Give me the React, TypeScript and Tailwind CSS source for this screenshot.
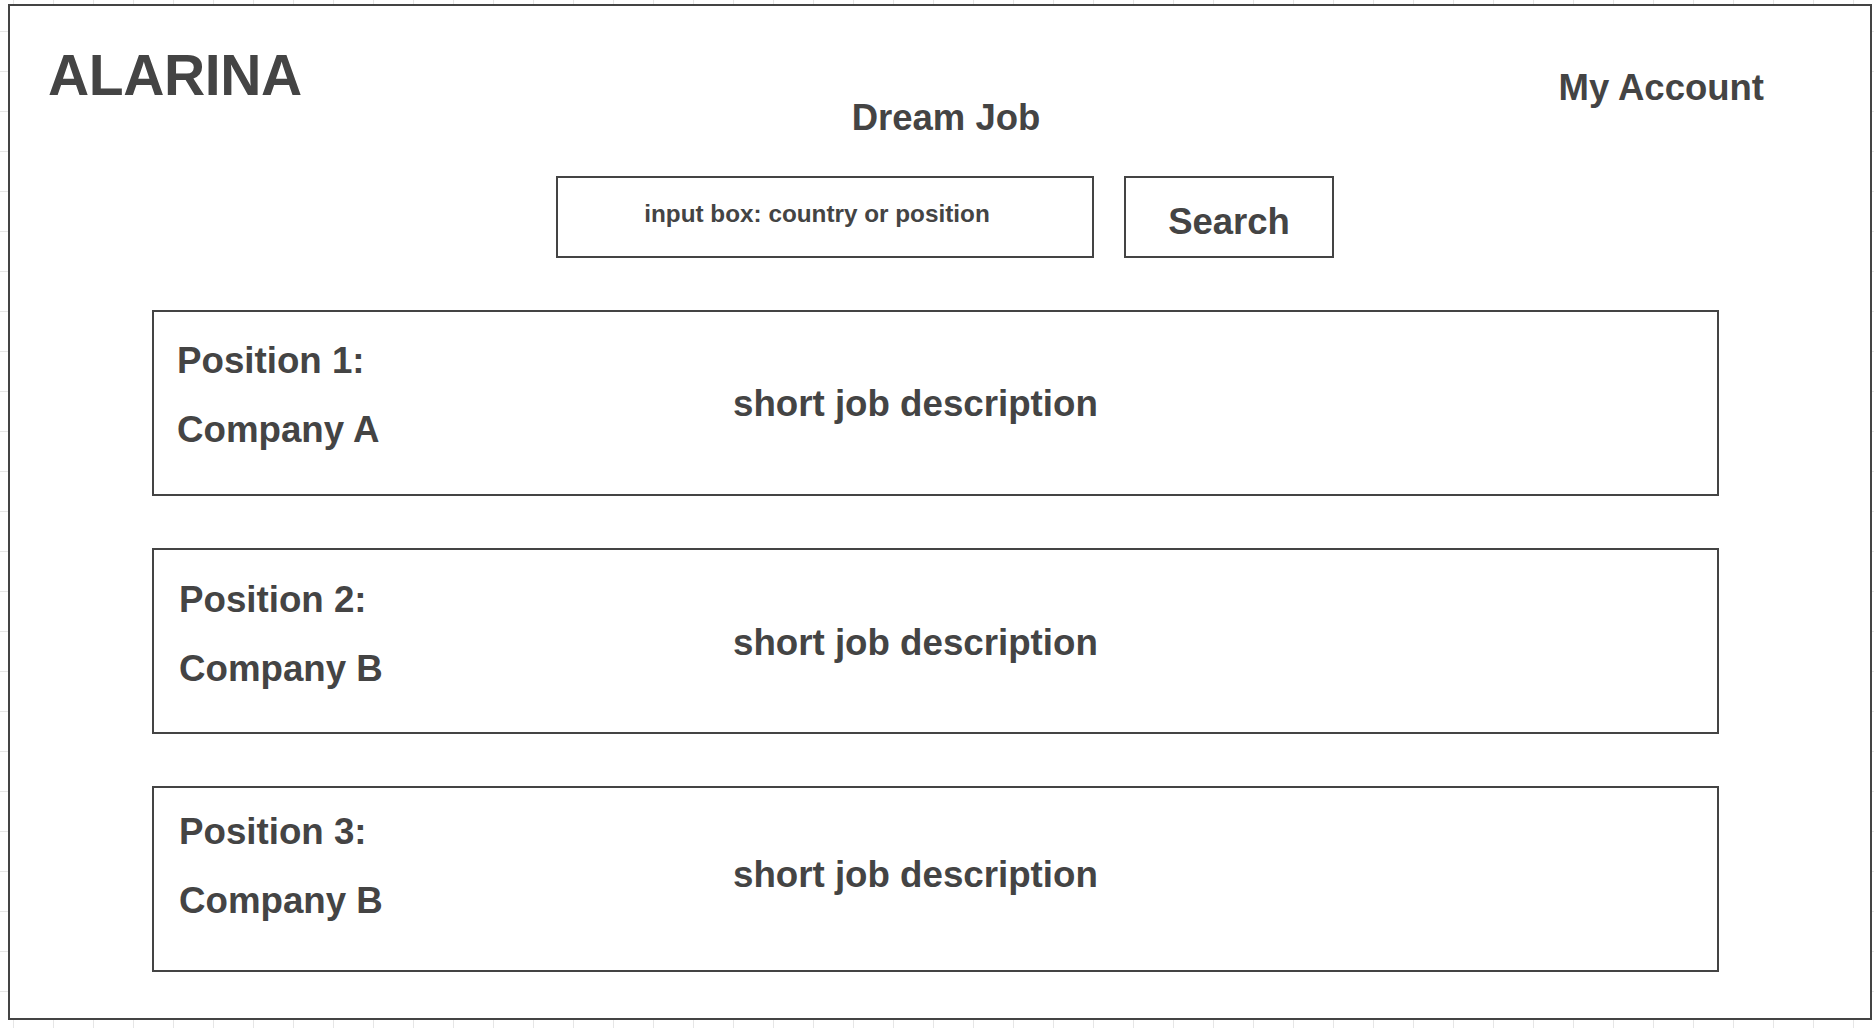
import React from "react";

type Job = { position: string; company: string };

const jobs: Job[] = [
  { position: "Position 1:", company: "Company A" },
  { position: "Position 2:", company: "Company B" },
  { position: "Position 3:", company: "Company B" },
];

function JobCard({ job, idx }: { job: Job; idx: number }) {
  const padTop = idx === 0 ? "pt-[31px]" : idx === 1 ? "pt-[32px]" : "pt-[26px]";
  const padLeft = idx === 0 ? "pl-[23px]" : "pl-[25px]";
  const descTop = idx === 0 ? "pt-[74px]" : idx === 1 ? "pt-[75px]" : "pt-[69px]";
  return (
    <div className="w-[1567px] h-[186px] border-2 border-[#444] flex bg-white">
      <div className={`w-[579px] shrink-0 flex flex-col ${padTop} ${padLeft}`}>
        <div className="text-[36.7px] leading-none font-bold">{job.position}</div>
        <div className="text-[36.7px] leading-none font-bold mt-[33px]">{job.company}</div>
      </div>
      <div className={`flex flex-col ${descTop}`}>
        <div className="text-[36.7px] leading-none font-bold">short job description</div>
      </div>
    </div>
  );
}

export default function App() {
  return (
    <div className="w-[1874px] h-[1028px] overflow-hidden pt-[4px] pl-[8px] bg-white bg-[linear-gradient(to_right,#e6e6e6_1px,transparent_1px),linear-gradient(to_bottom,#e6e6e6_1px,transparent_1px)] bg-[size:40px_40px] bg-[position:13px_31px] font-[family-name:'Liberation_Sans',Arial,sans-serif] text-[#444]">
      <div className="w-[1864px] h-[1016px] border-2 border-[#444] bg-white flex flex-col">
        <div className="h-[94px] flex items-start">
          <div className="ml-[38px] mt-[41px] text-[57px] leading-none font-bold tracking-[-0.4px]">ALARINA</div>
          <div className="ml-auto mr-[106px] mt-[64px] text-[36.5px] leading-none font-bold">My Account</div>
        </div>
        <div className="pl-[12px] text-center text-[36.5px] leading-none font-bold">Dream Job</div>
        <div className="mt-[39px] pl-[10px] flex justify-center gap-[30px]">
          <div className="w-[538px] h-[82px] border-2 border-[#444] flex justify-center pt-[24px] pr-[16px]">
            <span className="text-[24.3px] leading-none font-bold">input box: country or position</span>
          </div>
          <div className="w-[210px] h-[82px] border-2 border-[#444] flex justify-center pt-[26px]">
            <span className="text-[36.5px] leading-none font-bold">Search</span>
          </div>
        </div>
        <div className="mt-[52px] ml-[142px] flex flex-col gap-[52px]">
          {jobs.map((j, i) => (
            <JobCard key={i} job={j} idx={i} />
          ))}
        </div>
      </div>
    </div>
  );
}
